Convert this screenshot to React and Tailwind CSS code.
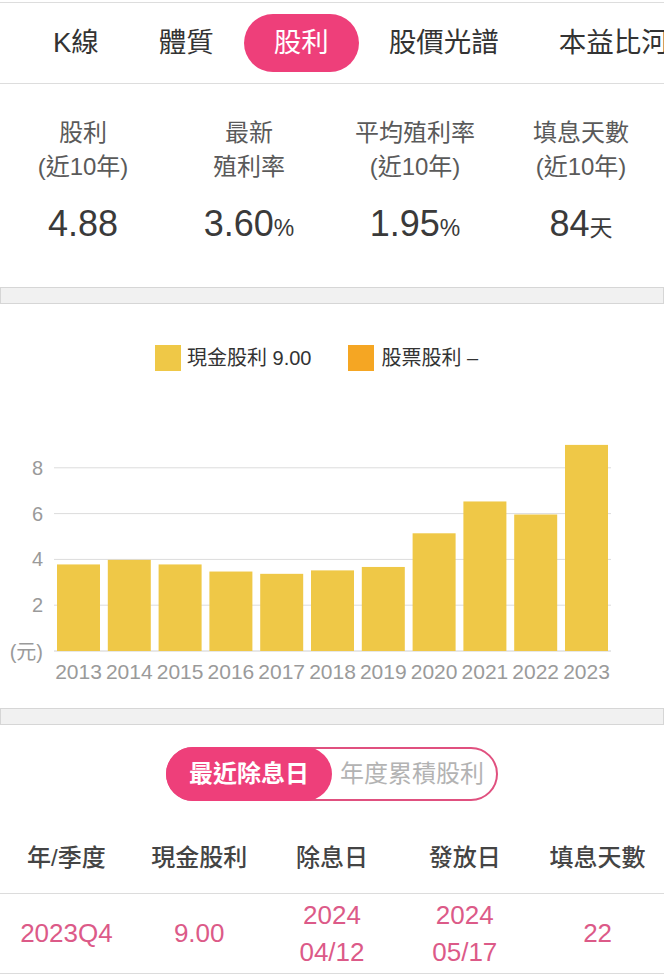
import React from 'react';

const FONT = { fontFamily: '"Liberation Sans", "Noto Sans CJK TC", sans-serif' };

const tabs = ['K線', '體質', '股利', '股價光譜', '本益比河'];

const stats = [
  { label: ['股利', '(近10年)'], value: '4.88', unit: '' },
  { label: ['最新', '殖利率'], value: '3.60', unit: '%' },
  { label: ['平均殖利率', '(近10年)'], value: '1.95', unit: '%' },
  { label: ['填息天數', '(近10年)'], value: '84', unit: '天' },
];

const bars = [
  { year: '2013', v: 3.78 },
  { year: '2014', v: 3.98 },
  { year: '2015', v: 3.78 },
  { year: '2016', v: 3.47 },
  { year: '2017', v: 3.37 },
  { year: '2018', v: 3.52 },
  { year: '2019', v: 3.67 },
  { year: '2020', v: 5.14 },
  { year: '2021', v: 6.53 },
  { year: '2022', v: 5.96 },
  { year: '2023', v: 9.0 },
];

const Band = () => (
  <div className="h-[17px] bg-[#f1f1f1] border border-[#d6d6d6]" />
);

const DividendChart = () => {
  // svg starts at page y 371
  const base = 280;
  const unit = 22.9;
  const ticks = [2, 4, 6, 8];
  return (
    <svg width="664" height="337" viewBox="0 0 664 337" className="block">
      {ticks.map((t) => (
        <g key={t}>
          <line x1="54" x2="611" y1={base - t * unit} y2={base - t * unit} stroke="#dcdcdc" strokeWidth="1" />
          <text x="43" y={base - t * unit + 7} textAnchor="end" fontSize="20" fill="#9a9a9a" style={FONT}>
            {t}
          </text>
        </g>
      ))}
      <line x1="54" x2="611" y1={base} y2={base} stroke="#d0d0d0" strokeWidth="1" />
      <text x="43" y={base + 8} textAnchor="end" fontSize="20" fill="#9a9a9a" style={FONT}>
        (元)
      </text>
      {bars.map((b, i) => {
        const x = 57 + i * 50.8;
        const h = b.v * unit;
        return (
          <g key={b.year}>
            <rect x={x} y={base - h} width="43" height={h} fill="#efc847" />
            <text x={x + 21.5} y={base + 28} textAnchor="middle" fontSize="21" fill="#9a9a9a" style={FONT}>
              {b.year}
            </text>
          </g>
        );
      })}
    </svg>
  );
};

export default function App() {
  return (
    <div className="w-[664px] bg-white overflow-hidden" style={FONT}>
      {/* tabs */}
      <div className="pt-[2px]">
        <div className="h-[82px] border-y border-[#dddddd] flex items-center pl-[23px] whitespace-nowrap overflow-hidden">
          {tabs.map((t) => (
            <div
              key={t}
              className={
                t === '股利'
                  ? 'h-[58px] px-[30px] rounded-full bg-[#ee3f7a] text-white text-[27.5px] flex items-center shrink-0'
                  : 'h-[58px] px-[30px] text-[#333333] text-[27.5px] flex items-center shrink-0'
              }
            >
              {t}
            </div>
          ))}
        </div>
      </div>

      {/* stats */}
      <div className="h-[203px] grid grid-cols-4 pt-[32px]">
        {stats.map((s) => (
          <div key={s.value} className="flex flex-col items-center">
            <div className="text-[24px] leading-[34px] text-[#5a5a5a]">{s.label[0]}</div>
            <div className="text-[24px] leading-[34px] text-[#5a5a5a]">{s.label[1]}</div>
            <div className="mt-[18px] h-[44px] flex items-baseline text-[#3a3a3a]">
              <span className="text-[36px] leading-[44px]">{s.value}</span>
              {s.unit && <span className="text-[23px]">{s.unit}</span>}
            </div>
          </div>
        ))}
      </div>

      <Band />

      {/* chart */}
      <div className="h-[404px] pt-[41px]">
        <div className="h-[26px] flex items-center pl-[155px]">
          <div className="w-[26px] h-[26px] bg-[#efc847]" />
          <span className="ml-[6px] text-[20px] text-[#333333]">現金股利 9.00</span>
          <div className="ml-[37px] w-[26px] h-[26px] bg-[#f5a623]" />
          <span className="ml-[7px] text-[20px] text-[#333333]">股票股利 –</span>
        </div>
        <DividendChart />
      </div>

      <Band />

      {/* toggle */}
      <div className="pt-[22px] flex justify-center">
        <div className="h-[54px] w-[332px] rounded-full border-2 border-[#e0507f] flex items-center">
          <div className="h-[54px] -ml-[2px] w-[166px] rounded-full bg-[#ee3f7a] text-white font-bold text-[24px] flex items-center justify-center">
            最近除息日
          </div>
          <div className="flex-1 text-center text-[24px] text-[#b3b3b3] pr-[4px]">年度累積股利</div>
        </div>
      </div>

      {/* table */}
      <div className="mt-[21px] h-[72px] grid grid-cols-5 items-center border-b border-[#dcdcdc] text-[24px] text-[#444444] font-medium">
        <div className="text-center">年/季度</div>
        <div className="text-center">現金股利</div>
        <div className="text-center">除息日</div>
        <div className="text-center">發放日</div>
        <div className="text-center">填息天數</div>
      </div>
      <div className="h-[80px] grid grid-cols-5 items-center border-b border-[#dcdcdc] text-[26px] text-[#dc5a88]">
        <div className="text-center">2023Q4</div>
        <div className="text-center">9.00</div>
        <div className="text-center leading-[37px]">
          <div>2024</div>
          <div>04/12</div>
        </div>
        <div className="text-center leading-[37px]">
          <div>2024</div>
          <div>05/17</div>
        </div>
        <div className="text-center">22</div>
      </div>
    </div>
  );
}
